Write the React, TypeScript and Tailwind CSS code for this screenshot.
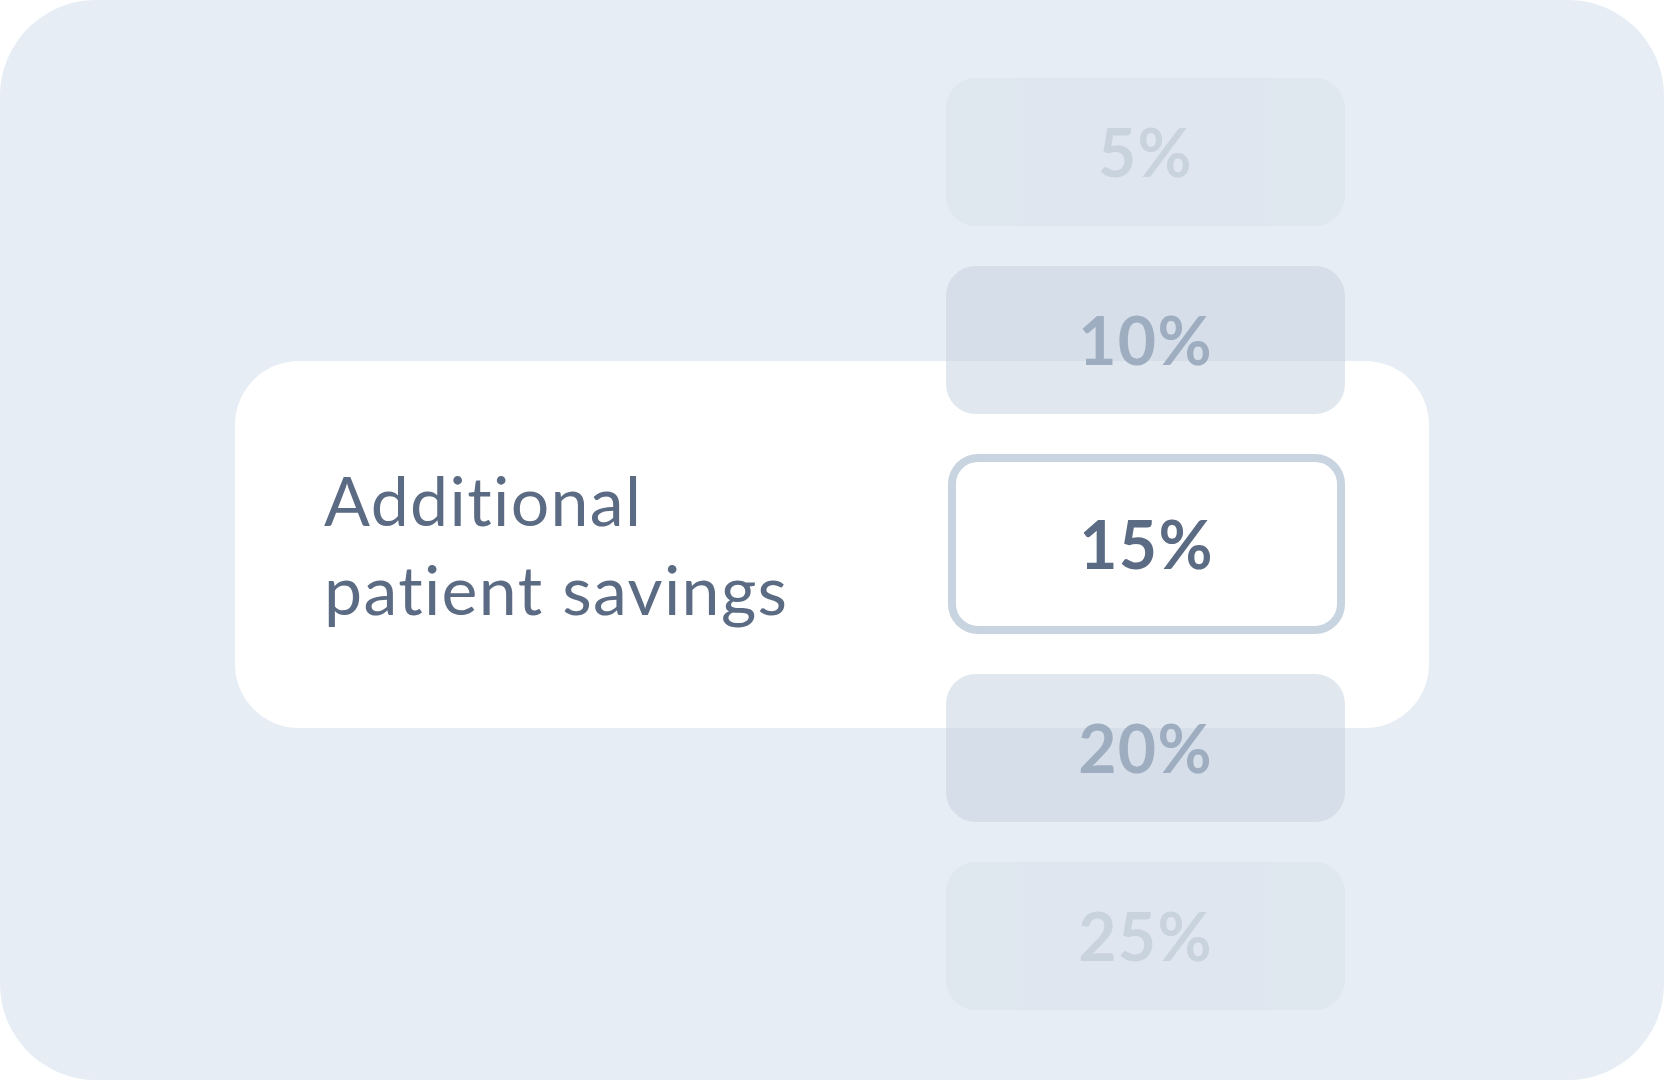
const options = [
  { label: "5%", faded: true },
  { label: "10%", faded: false },
  { label: "15%", selected: true },
  { label: "20%", faded: false },
  { label: "25%", faded: true },
];

export default function App() {
  return (
    <div
      className="h-screen w-full bg-white [font-variant-ligatures:none]"
      style={{ fontFamily: "Lato, 'Noto Sans', sans-serif" }}
    >
      <div className="grid h-full w-full place-items-center rounded-[96px] bg-[#e7edf4] pt-[8px]">
        <div className="grid w-[1194px] items-center">
          <div className="flex h-[367px] items-center rounded-[64px] bg-white pl-[89px] [grid-area:1/1]">
            <p className="text-[68px] leading-[89px] font-normal tracking-[0.02em] text-[#5b6b83]">
              Additional
              <br />
              patient savings
            </p>
          </div>

          <div className="mr-[84px] flex w-[399px] flex-col gap-[40px] justify-self-end [grid-area:1/1]">
            {options.map((o) =>
              o.selected ? (
                <div
                  key={o.label}
                  className="flex h-[180px] w-[397px] items-center justify-center self-end rounded-[30px] border-8 border-[#c9d4e1] bg-white"
                >
                  <span className="text-[66px] leading-none font-bold tracking-[0.02em] text-[#5b6b83]">
                    {o.label}
                  </span>
                </div>
              ) : (
                <div
                  key={o.label}
                  className={`flex h-[148px] items-center justify-center rounded-[30px] bg-[rgba(195,208,222,0.5)] ${
                    o.faded ? "opacity-40" : ""
                  }`}
                >
                  <span className="text-[66px] leading-none font-bold tracking-[0.02em] text-[#9eadbf]">
                    {o.label}
                  </span>
                </div>
              )
            )}
          </div>
        </div>
      </div>
    </div>
  );
}
